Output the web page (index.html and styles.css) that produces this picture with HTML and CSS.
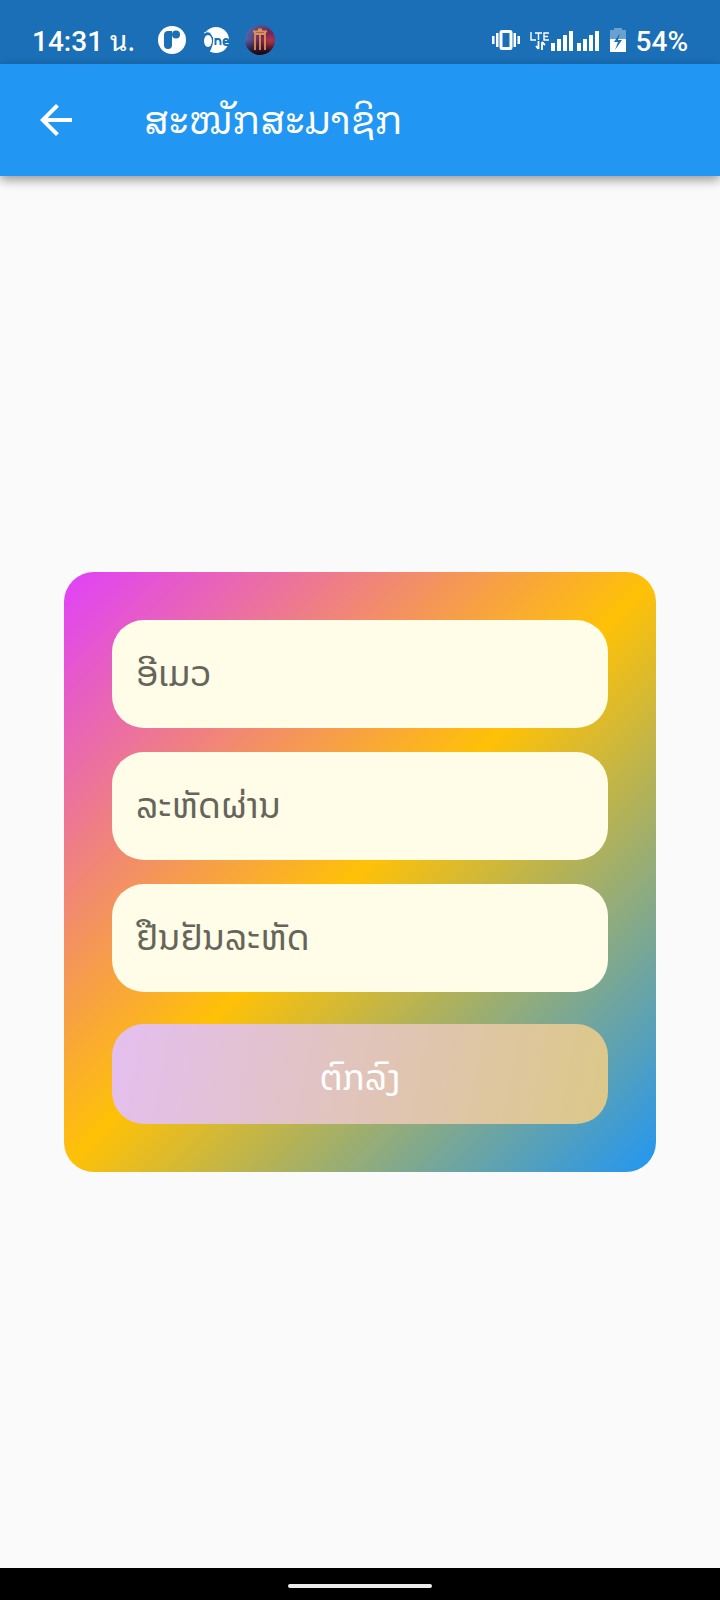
FILE: index.html
```html
<!DOCTYPE html>
<html lang="lo">
<head>
<meta charset="utf-8">
<meta name="viewport" content="width=device-width, initial-scale=1">
<title>ສະໝັກສະມາຊິກ</title>
<link rel="stylesheet" href="styles.css">
</head>
<body>
<div class="status-bar">
  <div class="status-left">
    <span class="clock">14:31 <span class="unit" lang="th">น.</span></span>
    <svg class="app-icon" viewBox="0 0 30 30" aria-hidden="true">
      <circle cx="15" cy="15" r="14" fill="#fff"/>
      <path d="M7 10q0-4 4-4h4v14q0 4-4 4t-4-4z" fill="#1a6fb6"/>
      <circle cx="19" cy="9.500" r="4" fill="#1a6fb6"/>
    </svg>
    <svg class="app-icon" viewBox="0 0 30 30" aria-hidden="true">
      <circle cx="15" cy="15" r="13" fill="#fff"/>
      <path d="M0 6h4q6 0 8 6 1 8-4 16H0z" fill="#1a6fb6"/>
      <path d="M3 8q6-4 9 4" fill="none" stroke="#fff" stroke-width="1"/>
      <ellipse cx="7" cy="16" rx="4" ry="6" fill="#fff"/>
      <path d="M14.500 20v-7M14.500 16q0-2 2.500-2t2.500 3v3M22.500 17h5q0-3-2.500-3t-2.500 3q0 3 3 3h2" fill="none" stroke="#1a6fb6" stroke-width="1.900"/>
    </svg>
    <svg class="app-icon" viewBox="0 0 30 30" aria-hidden="true">
      <defs>
        <radialGradient id="globe" cx="0.85" cy="0.6" r="0.9">
          <stop offset="0" stop-color="#c23a4d"/>
          <stop offset="0.4" stop-color="#6e2557"/>
          <stop offset="1" stop-color="#4b6bb5"/>
        </radialGradient>
        <linearGradient id="shade" x1="0" y1="0" x2="0" y2="1">
          <stop offset="0.5" stop-color="#12040d" stop-opacity="0"/>
          <stop offset="1" stop-color="#12040d"/>
        </linearGradient>
      </defs>
      <circle cx="15" cy="15" r="15" fill="url(#globe)"/>
      <circle cx="15" cy="15" r="15" fill="url(#shade)"/>
      <path d="M8 6.500h14M13 4.500h4M10 7v18M20 7v18M15 8v17M10 9h10" fill="none" stroke="#e09050" stroke-width="1.800"/>
    </svg>
  </div>
  <div class="status-right">
    <svg class="vibrate" viewBox="0 0 28 20" aria-hidden="true">
      <path d="M0 6h2.500v8H0zM4 3h2.500v14H4zM21.500 3H24v14h-2.500zM25.500 6H28v8h-2.500z" fill="#fff"/>
      <rect x="9" y="1.500" width="10" height="17" rx="1" fill="none" stroke="#fff" stroke-width="3"/>
    </svg>
    <svg class="signal" viewBox="0 0 70 22" aria-hidden="true">
      <path d="M1 3v8h5M5 4h7M8.500 4v7M19 4h-5v7h5M14 7.500h4" fill="none" stroke="#fff" stroke-width="1.400"/>
      <path d="M8.500 12v8M6 17l2.500 3M12 21v-8M12 13l3 3" fill="none" stroke="#fff" stroke-width="1.800"/>
      <path d="M21 14h4v8h-4zM27 10h4v12h-4zM33 6h4v16h-4zM39 2h4v20h-4zM47 14h4v8h-4zM53 10h4v12h-4zM59 6h4v16h-4zM65 2h4v20h-4z" fill="#fff"/>
    </svg>
    <svg class="battery" viewBox="0 0 16 24" aria-hidden="true">
      <path d="M4 0h8v2h4v10H0V2h4z" fill="#69a1cf"/>
      <path d="M0 11h16v13H0z" fill="#fff"/>
      <path d="M10 5 4 14h4l-3 8 7-10H8z" fill="#1a6fb6"/>
    </svg>
    <span class="percent">54%</span>
  </div>
</div>
<header class="app-bar">
  <button class="back" type="button" aria-label="ກັບຄືນ">
    <svg viewBox="0 0 32 32" aria-hidden="true">
      <path d="M32 14v4H7.700l11.200 11.200L16 32 0 16 16 0l2.900 2.800L7.700 14z" fill="#fff"/>
    </svg>
  </button>
  <h1 class="title">ສະໝັກສະມາຊິກ</h1>
</header>
<main class="content">
  <form class="card">
    <input class="field" type="email" placeholder="ອີເມວ" aria-label="ອີເມວ">
    <input class="field" type="password" placeholder="ລະຫັດຜ່ານ" aria-label="ລະຫັດຜ່ານ">
    <input class="field" type="password" placeholder="ຢືນຢັນລະຫັດ" aria-label="ຢືນຢັນລະຫັດ">
    <button class="submit" type="button">ຕົກລົງ</button>
  </form>
</main>
<div class="nav-bar"><span class="handle"></span></div>
</body>
</html>
```
FILE: styles.css
```css
* {
  box-sizing: border-box;
}

body {
  margin: 0;
  min-height: 100vh;
  display: flex;
  flex-direction: column;
  background: #fafafa;
  font-family: Roboto, "Noto Sans Lao", "Noto Sans Thai", "DejaVu Sans", sans-serif;
}

.status-bar {
  display: flex;
  align-items: center;
  justify-content: space-between;
  height: 64px;
  padding: 16px 32px 0;
  background: #1a6fb6;
  color: #fff;
  font-size: 28px;
  font-weight: 500;
  line-height: 32px;
}

.status-left,
.status-right {
  display: flex;
  align-items: center;
}

.status-left {
  gap: 14px;
}

.clock {
  min-width: 111px;
  white-space: nowrap;
}

.unit {
  font-family: "Noto Sans Thai Looped", "Noto Looped Thai", Loma, Waree, Garuda, "Noto Serif Thai", Roboto, sans-serif;
  font-weight: 400;
}

.app-icon {
  width: 30px;
  height: 30px;
}

.status-right {
  gap: 10px;
}

.vibrate {
  width: 28px;
  height: 20px;
}

.signal {
  width: 70px;
  height: 22px;
}

.battery {
  width: 16px;
  height: 24px;
}

.percent {
  padding-top: 4px;
}

.app-bar {
  display: flex;
  align-items: center;
  gap: 72px;
  height: 112px;
  padding: 0 40px;
  background: #2196f3;
  color: #fff;
  box-shadow: 0 4px 10px rgba(0, 0, 0, 0.4);
}

.back {
  width: 32px;
  height: 32px;
  padding: 0;
  border: 0;
  background: none;
}

.back svg {
  display: block;
  width: 32px;
  height: 32px;
}

.title {
  margin: 0;
  padding-bottom: 6px;
  font-family: "Noto Sans Lao Looped", "DejaVu Sans", sans-serif;
  font-size: 38px;
  font-weight: 400;
  line-height: 48px;
}

.content {
  flex: 1;
  display: flex;
  flex-direction: column;
  justify-content: center;
  padding: 0 64px;
}

.card {
  display: flex;
  flex-direction: column;
  gap: 24px;
  padding: 48px;
  border-radius: 30px;
  background: linear-gradient(135deg, #e040fb, #ffc107, #2196f3);
}

.field {
  width: 100%;
  height: 108px;
  padding: 0 24px;
  border: 0;
  border-radius: 32px;
  background: #fffde7;
  color: #333;
  font-family: inherit;
  font-size: 36px;
}

.field::placeholder {
  color: #66655c;
  opacity: 1;
}

.submit {
  height: 100px;
  margin-top: 8px;
  padding: 6px 0 0;
  border: 0;
  border-radius: 32px;
  background: linear-gradient(101deg, #e4bff0, #e1c4ba, #dcc888);
  color: #fff;
  font-family: inherit;
  font-size: 36px;
}

.nav-bar {
  display: flex;
  align-items: center;
  justify-content: center;
  height: 32px;
  padding-top: 4px;
  background: #000;
}

.handle {
  width: 144px;
  height: 4px;
  border-radius: 2px;
  background: #ececec;
}
```
